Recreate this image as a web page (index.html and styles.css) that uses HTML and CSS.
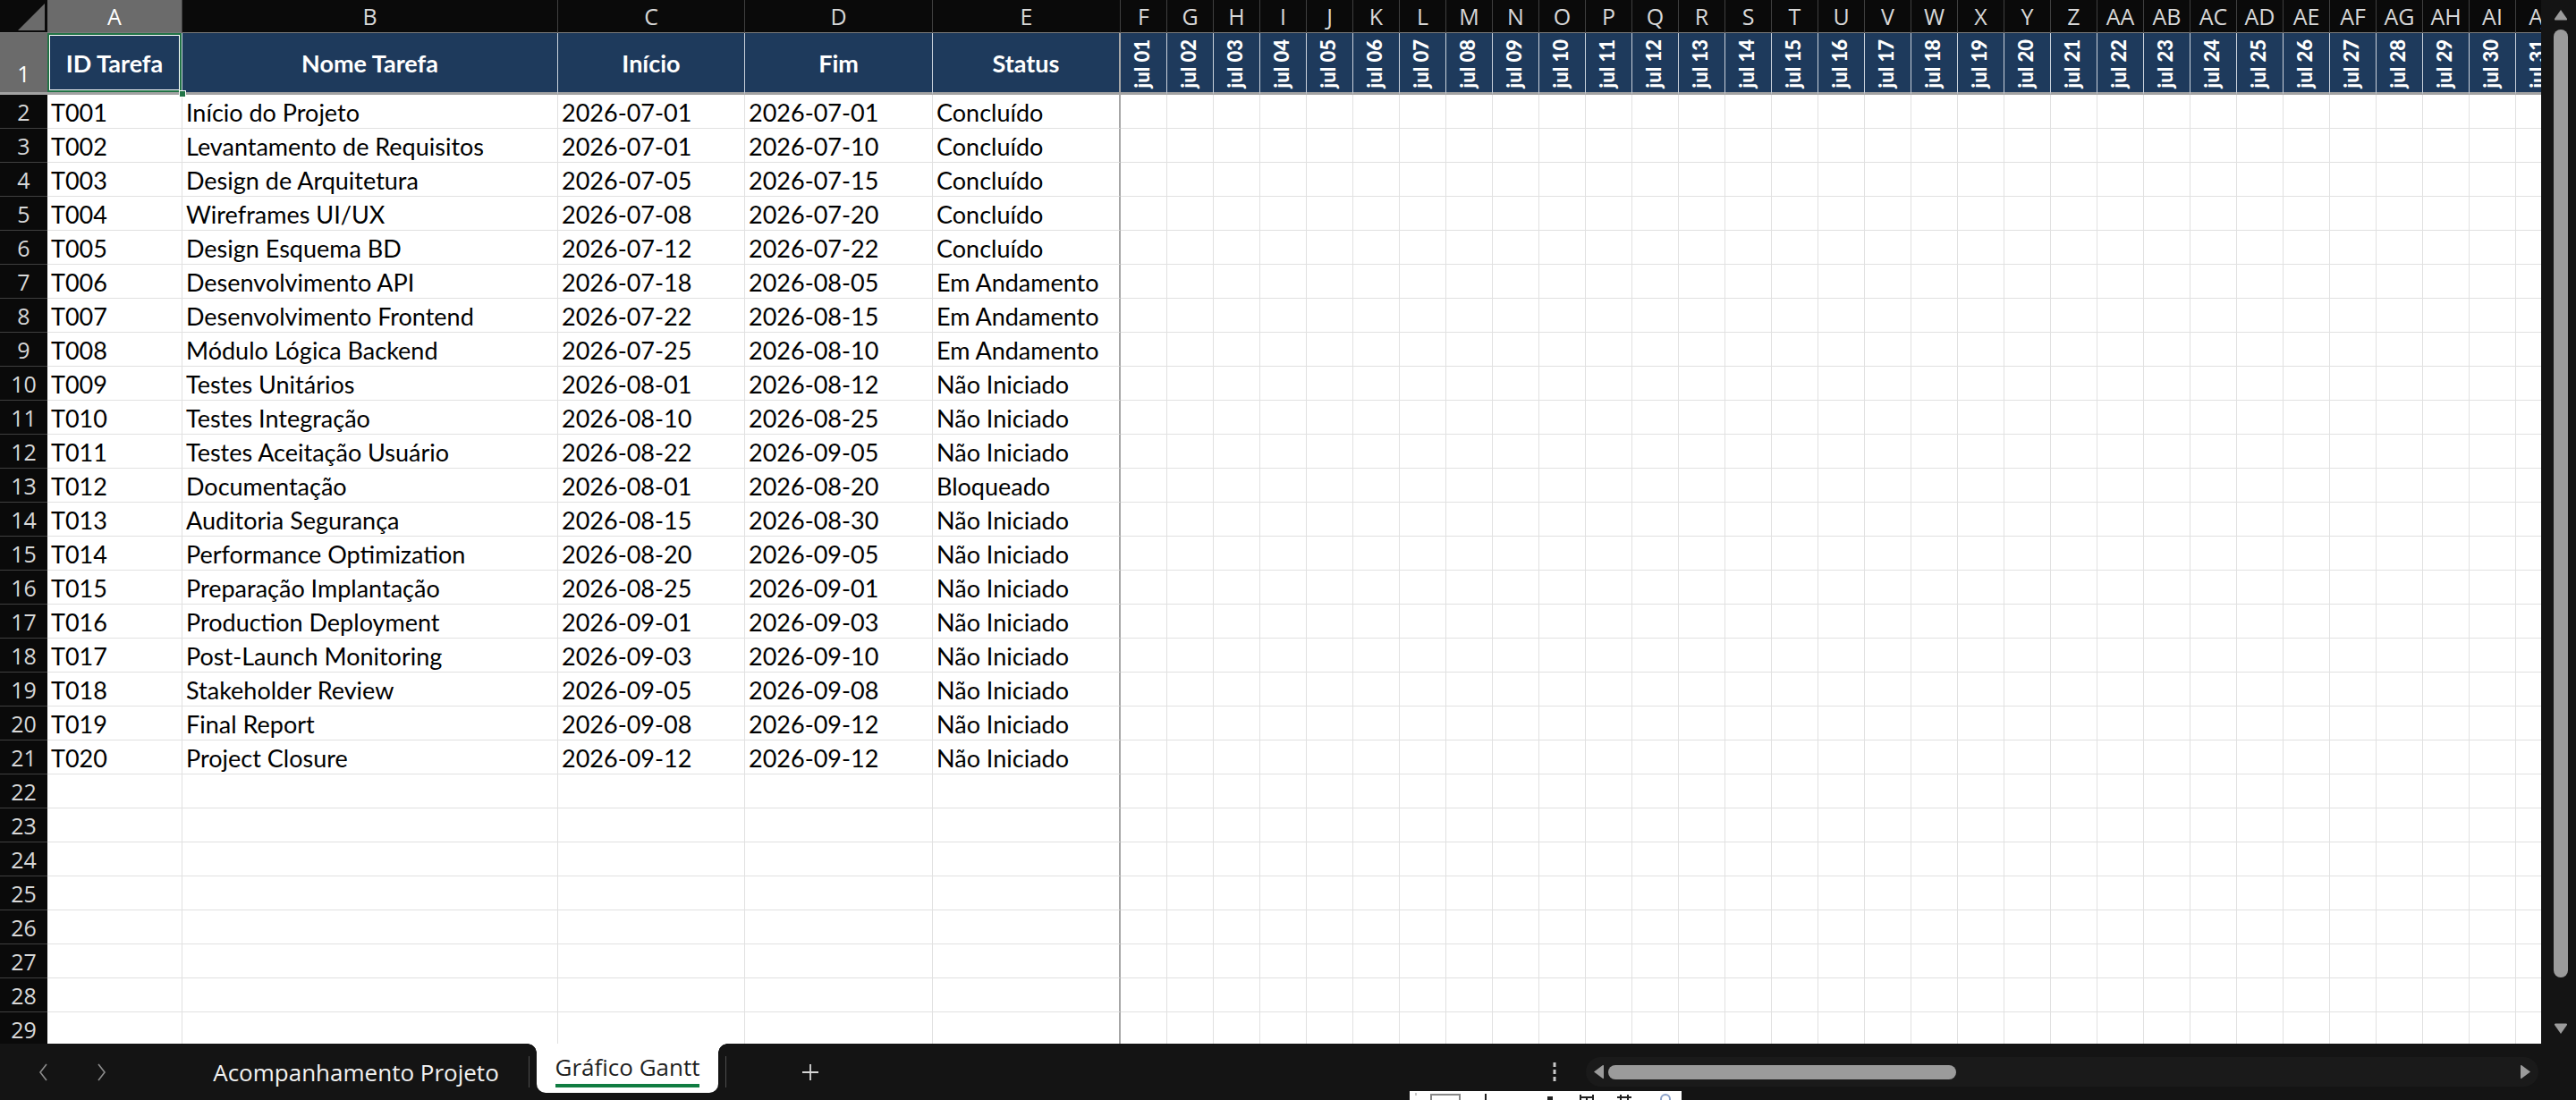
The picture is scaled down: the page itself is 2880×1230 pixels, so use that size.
FILE: index.html
```html
<!DOCTYPE html>
<html lang="pt">
<head>
<meta charset="utf-8">
<title>Gráfico Gantt</title>
<link rel="stylesheet" href="styles.css">
</head>
<body>
<div class="app">
  <div class="sheet-area">
    <div class="viewport">
      <div class="sheet">
        <div class="row">
          <div class="corner"><svg width="53" height="37" viewBox="0 0 53 37"><polygon points="20,34 50,4 50,34" fill="#6b6b6b"/></svg></div>
          <div class="colhdr sel">A</div>
          <div class="colhdr">B</div>
          <div class="colhdr">C</div>
          <div class="colhdr">D</div>
          <div class="colhdr">E</div>
          <div class="days">
            <div class="colhdr">F</div><div class="colhdr">G</div><div class="colhdr">H</div><div class="colhdr">I</div><div class="colhdr">J</div><div class="colhdr">K</div><div class="colhdr">L</div><div class="colhdr">M</div><div class="colhdr">N</div><div class="colhdr">O</div><div class="colhdr">P</div><div class="colhdr">Q</div><div class="colhdr">R</div><div class="colhdr">S</div><div class="colhdr">T</div><div class="colhdr">U</div><div class="colhdr">V</div><div class="colhdr">W</div><div class="colhdr">X</div><div class="colhdr">Y</div><div class="colhdr">Z</div><div class="colhdr">AA</div><div class="colhdr">AB</div><div class="colhdr">AC</div><div class="colhdr">AD</div><div class="colhdr">AE</div><div class="colhdr">AF</div><div class="colhdr">AG</div><div class="colhdr">AH</div><div class="colhdr">AI</div><div class="colhdr">AJ</div>
          </div>
        </div>
        <div class="row">
          <div class="rownum sel">1</div>
          <div class="th a1">ID Tarefa<span class="handle"></span></div>
          <div class="th">Nome Tarefa</div>
          <div class="th">Início</div>
          <div class="th">Fim</div>
          <div class="th pane">Status</div>
          <div class="days">
            <div class="th date"><span>jul 01</span></div><div class="th date"><span>jul 02</span></div><div class="th date"><span>jul 03</span></div><div class="th date"><span>jul 04</span></div><div class="th date"><span>jul 05</span></div><div class="th date"><span>jul 06</span></div><div class="th date"><span>jul 07</span></div><div class="th date"><span>jul 08</span></div><div class="th date"><span>jul 09</span></div><div class="th date"><span>jul 10</span></div><div class="th date"><span>jul 11</span></div><div class="th date"><span>jul 12</span></div><div class="th date"><span>jul 13</span></div><div class="th date"><span>jul 14</span></div><div class="th date"><span>jul 15</span></div><div class="th date"><span>jul 16</span></div><div class="th date"><span>jul 17</span></div><div class="th date"><span>jul 18</span></div><div class="th date"><span>jul 19</span></div><div class="th date"><span>jul 20</span></div><div class="th date"><span>jul 21</span></div><div class="th date"><span>jul 22</span></div><div class="th date"><span>jul 23</span></div><div class="th date"><span>jul 24</span></div><div class="th date"><span>jul 25</span></div><div class="th date"><span>jul 26</span></div><div class="th date"><span>jul 27</span></div><div class="th date"><span>jul 28</span></div><div class="th date"><span>jul 29</span></div><div class="th date"><span>jul 30</span></div><div class="th date"><span>jul 31</span></div>
          </div>
        </div>
        <div class="row"><div class="rownum">2</div><div class="cell">T001</div><div class="cell">Início do Projeto</div><div class="cell">2026-07-01</div><div class="cell">2026-07-01</div><div class="cell pane">Concluído</div><div class="timeline"></div></div>
        <div class="row"><div class="rownum">3</div><div class="cell">T002</div><div class="cell">Levantamento de Requisitos</div><div class="cell">2026-07-01</div><div class="cell">2026-07-10</div><div class="cell pane">Concluído</div><div class="timeline"></div></div>
        <div class="row"><div class="rownum">4</div><div class="cell">T003</div><div class="cell">Design de Arquitetura</div><div class="cell">2026-07-05</div><div class="cell">2026-07-15</div><div class="cell pane">Concluído</div><div class="timeline"></div></div>
        <div class="row"><div class="rownum">5</div><div class="cell">T004</div><div class="cell">Wireframes UI/UX</div><div class="cell">2026-07-08</div><div class="cell">2026-07-20</div><div class="cell pane">Concluído</div><div class="timeline"></div></div>
        <div class="row"><div class="rownum">6</div><div class="cell">T005</div><div class="cell">Design Esquema BD</div><div class="cell">2026-07-12</div><div class="cell">2026-07-22</div><div class="cell pane">Concluído</div><div class="timeline"></div></div>
        <div class="row"><div class="rownum">7</div><div class="cell">T006</div><div class="cell">Desenvolvimento API</div><div class="cell">2026-07-18</div><div class="cell">2026-08-05</div><div class="cell pane">Em Andamento</div><div class="timeline"></div></div>
        <div class="row"><div class="rownum">8</div><div class="cell">T007</div><div class="cell">Desenvolvimento Frontend</div><div class="cell">2026-07-22</div><div class="cell">2026-08-15</div><div class="cell pane">Em Andamento</div><div class="timeline"></div></div>
        <div class="row"><div class="rownum">9</div><div class="cell">T008</div><div class="cell">Módulo Lógica Backend</div><div class="cell">2026-07-25</div><div class="cell">2026-08-10</div><div class="cell pane">Em Andamento</div><div class="timeline"></div></div>
        <div class="row"><div class="rownum">10</div><div class="cell">T009</div><div class="cell">Testes Unitários</div><div class="cell">2026-08-01</div><div class="cell">2026-08-12</div><div class="cell pane">Não Iniciado</div><div class="timeline"></div></div>
        <div class="row"><div class="rownum">11</div><div class="cell">T010</div><div class="cell">Testes Integração</div><div class="cell">2026-08-10</div><div class="cell">2026-08-25</div><div class="cell pane">Não Iniciado</div><div class="timeline"></div></div>
        <div class="row"><div class="rownum">12</div><div class="cell">T011</div><div class="cell">Testes Aceitação Usuário</div><div class="cell">2026-08-22</div><div class="cell">2026-09-05</div><div class="cell pane">Não Iniciado</div><div class="timeline"></div></div>
        <div class="row"><div class="rownum">13</div><div class="cell">T012</div><div class="cell">Documentação</div><div class="cell">2026-08-01</div><div class="cell">2026-08-20</div><div class="cell pane">Bloqueado</div><div class="timeline"></div></div>
        <div class="row"><div class="rownum">14</div><div class="cell">T013</div><div class="cell">Auditoria Segurança</div><div class="cell">2026-08-15</div><div class="cell">2026-08-30</div><div class="cell pane">Não Iniciado</div><div class="timeline"></div></div>
        <div class="row"><div class="rownum">15</div><div class="cell">T014</div><div class="cell">Performance Optimization</div><div class="cell">2026-08-20</div><div class="cell">2026-09-05</div><div class="cell pane">Não Iniciado</div><div class="timeline"></div></div>
        <div class="row"><div class="rownum">16</div><div class="cell">T015</div><div class="cell">Preparação Implantação</div><div class="cell">2026-08-25</div><div class="cell">2026-09-01</div><div class="cell pane">Não Iniciado</div><div class="timeline"></div></div>
        <div class="row"><div class="rownum">17</div><div class="cell">T016</div><div class="cell">Production Deployment</div><div class="cell">2026-09-01</div><div class="cell">2026-09-03</div><div class="cell pane">Não Iniciado</div><div class="timeline"></div></div>
        <div class="row"><div class="rownum">18</div><div class="cell">T017</div><div class="cell">Post-Launch Monitoring</div><div class="cell">2026-09-03</div><div class="cell">2026-09-10</div><div class="cell pane">Não Iniciado</div><div class="timeline"></div></div>
        <div class="row"><div class="rownum">19</div><div class="cell">T018</div><div class="cell">Stakeholder Review</div><div class="cell">2026-09-05</div><div class="cell">2026-09-08</div><div class="cell pane">Não Iniciado</div><div class="timeline"></div></div>
        <div class="row"><div class="rownum">20</div><div class="cell">T019</div><div class="cell">Final Report</div><div class="cell">2026-09-08</div><div class="cell">2026-09-12</div><div class="cell pane">Não Iniciado</div><div class="timeline"></div></div>
        <div class="row"><div class="rownum">21</div><div class="cell">T020</div><div class="cell">Project Closure</div><div class="cell">2026-09-12</div><div class="cell">2026-09-12</div><div class="cell pane">Não Iniciado</div><div class="timeline"></div></div>
        <div class="row"><div class="rownum">22</div><div class="cell"></div><div class="cell"></div><div class="cell"></div><div class="cell"></div><div class="cell pane"></div><div class="timeline"></div></div>
        <div class="row"><div class="rownum">23</div><div class="cell"></div><div class="cell"></div><div class="cell"></div><div class="cell"></div><div class="cell pane"></div><div class="timeline"></div></div>
        <div class="row"><div class="rownum">24</div><div class="cell"></div><div class="cell"></div><div class="cell"></div><div class="cell"></div><div class="cell pane"></div><div class="timeline"></div></div>
        <div class="row"><div class="rownum">25</div><div class="cell"></div><div class="cell"></div><div class="cell"></div><div class="cell"></div><div class="cell pane"></div><div class="timeline"></div></div>
        <div class="row"><div class="rownum">26</div><div class="cell"></div><div class="cell"></div><div class="cell"></div><div class="cell"></div><div class="cell pane"></div><div class="timeline"></div></div>
        <div class="row"><div class="rownum">27</div><div class="cell"></div><div class="cell"></div><div class="cell"></div><div class="cell"></div><div class="cell pane"></div><div class="timeline"></div></div>
        <div class="row"><div class="rownum">28</div><div class="cell"></div><div class="cell"></div><div class="cell"></div><div class="cell"></div><div class="cell pane"></div><div class="timeline"></div></div>
        <div class="row"><div class="rownum">29</div><div class="cell"></div><div class="cell"></div><div class="cell"></div><div class="cell"></div><div class="cell pane"></div><div class="timeline"></div></div>
      </div>
    </div>
    <div class="vscroll">
      <svg class="varrow" width="16" height="13" viewBox="0 0 16 13"><path d="M8 1 L15 11 Q15.5 12.5 14 12.5 L2 12.5 Q0.5 12.5 1 11 Z" fill="#9b9b9b"/></svg>
      <div class="vthumb"></div>
      <svg class="varrow down" width="16" height="13" viewBox="0 0 16 13"><path d="M8 12 L15 2 Q15.5 0.5 14 0.5 L2 0.5 Q0.5 0.5 1 2 Z" fill="#9b9b9b"/></svg>
    </div>
  </div>
  <div class="tabbar">
    <div class="tabnav">
      <svg class="chev" width="16" height="22" viewBox="0 0 16 22"><polyline points="11,2 4,11 11,20" fill="none" stroke="#8c8c8c" stroke-width="1.6"/></svg>
      <svg class="chev" width="16" height="22" viewBox="0 0 16 22"><polyline points="5,2 12,11 5,20" fill="none" stroke="#8c8c8c" stroke-width="1.6"/></svg>
    </div>
    <div class="tab">Acompanhamento Projeto</div>
    <span class="tabsep"></span>
    <div class="tab active"><span class="tablabel">Gráfico Gantt</span></div>
    <span class="tabsep second"></span>
    <svg class="addsheet" width="22" height="22" viewBox="0 0 22 22"><path d="M11 2 V20 M2 11 H20" stroke="#d6d6d6" stroke-width="1.8"/></svg>
    <div class="spacer"></div>
    <svg class="more" width="6" height="22" viewBox="0 0 6 22"><rect x="1.5" y="0" width="3" height="5" fill="#c8c8c8"/><rect x="1.5" y="8" width="3" height="5" fill="#c8c8c8"/><rect x="1.5" y="16" width="3" height="5" fill="#c8c8c8"/></svg>
    <div class="hscroll">
      <svg width="14" height="17" viewBox="0 0 14 17"><path d="M2 8.5 L12 1 Q13 0.5 13 2 L13 15 Q13 16.5 12 16 Z" fill="#9b9b9b"/></svg>
      <div class="hthumb"></div>
      <div class="spacer"></div>
      <svg width="14" height="17" viewBox="0 0 14 17"><path d="M12 8.5 L2 1 Q1 0.5 1 2 L1 15 Q1 16.5 2 16 Z" fill="#9b9b9b"/></svg>
    </div>
  </div>
</div>
<div class="popup">
  <svg width="304" height="12" viewBox="0 0 304 12"><rect x="6" y="2" width="2" height="3" fill="#c8c8c8"/><rect x="24" y="4" width="32" height="10" fill="none" stroke="#888" stroke-width="2"/><rect x="84" y="3" width="2" height="9" fill="#222"/><rect x="154" y="6" width="6" height="6" fill="#222"/><path d="M191 4 V12 M191 7 H205 M205 4 V12 M198 7 V12" stroke="#222" stroke-width="2"/><path d="M232 7 H248 M236 4 V12 M244 4 V12" stroke="#222" stroke-width="2"/><circle cx="286" cy="9" r="5" fill="none" stroke="#8aa0c8" stroke-width="2"/></svg>
</div>
</body>
</html>
```

FILE: styles.css
```css
* { box-sizing: border-box; }

html, body {
  margin: 0;
  padding: 0;
}

body {
  width: 2880px;
  height: 1230px;
  overflow: hidden;
  position: relative;
  background: #141414;
  font-family: "Lato", "Liberation Sans", sans-serif;
}

.app {
  display: flex;
  flex-direction: column;
  height: 1230px;
}

.sheet-area {
  display: flex;
  height: 1167px;
}

.viewport {
  width: 2841px;
  height: 1167px;
  overflow: hidden;
  background: #ffffff;
}

.sheet {
  display: grid;
  grid-template-columns: 53px 151px 420px 209px 210px 210px 1612px;
  grid-template-rows: 37px 69px;
  grid-auto-rows: 38px;
  width: max-content;
}

.row { display: contents; }

.corner {
  background: #0a0a0a;
  border-bottom: 1px solid #7a7a7a;
}
.corner svg { display: block; }

.days {
  display: flex;
}
.days > * { flex: 0 0 52px; }

.colhdr {
  background: #0a0a0a;
  color: #d8d8d8;
  font-family: "Open Sans", "Noto Sans", sans-serif;
  font-size: 25px;
  display: flex;
  align-items: center;
  justify-content: center;
  border-right: 1px solid #3f3f3f;
  border-bottom: 1px solid #7a7a7a;
  white-space: nowrap;
  overflow: hidden;
}
.colhdr.sel {
  background: #6b6b6b;
  color: #ffffff;
}

.rownum {
  background: #0a0a0a;
  color: #d8d8d8;
  font-family: "Open Sans", "Noto Sans", sans-serif;
  font-size: 25px;
  display: flex;
  align-items: center;
  justify-content: center;
  border-bottom: 1px solid #3f3f3f;
}
.rownum.sel {
  background: #6b6b6b;
  color: #ffffff;
  align-items: flex-end;
  padding-bottom: 4px;
  border-bottom: 3px solid #a2a2a2;
}

.th {
  position: relative;
  background: #1e3a5c;
  color: #ffffff;
  font-weight: 700;
  font-size: 27px;
  display: flex;
  align-items: center;
  justify-content: center;
  border-right: 1px solid #c9d1db;
  border-bottom: 3px solid #a2a2a2;
  white-space: nowrap;
}
.th.pane { border-right: 2px solid #a6a6a6; }

.th.a1 {
  box-shadow: inset 0 0 0 2px #217346, inset 0 0 0 3px #ffffff;
}
.handle {
  position: absolute;
  right: -5px;
  bottom: -6px;
  width: 8px;
  height: 8px;
  background: #217346;
  border: 1px solid #ffffff;
  z-index: 2;
}

.date span {
  writing-mode: vertical-rl;
  transform: rotate(180deg);
  font-size: 22px;
  font-weight: 900;
  line-height: 24px;
  padding-left: 3px;
  margin-top: 2px;
}

.cell {
  font-size: 27px;
  color: #000000;
  padding: 4px 0 0 4px;
  line-height: 32px;
  border-right: 1px solid #e1e1e1;
  border-bottom: 1px solid #e1e1e1;
  white-space: nowrap;
  overflow: hidden;
}
.cell.pane { border-right: 2px solid #a6a6a6; }

.timeline {
  border-bottom: 1px solid #e1e1e1;
  background: repeating-linear-gradient(to right, transparent 0 51px, #e1e1e1 51px 52px);
}

.vscroll {
  width: 39px;
  height: 1167px;
  background: #141414;
  display: flex;
  flex-direction: column;
  align-items: center;
  padding-top: 10px;
  padding-left: 4px;
}
.varrow { display: block; flex: none; }
.vthumb {
  width: 16px;
  height: 1060px;
  margin-top: 10px;
  border-radius: 8px;
  background: #9b9b9b;
}
.varrow.down { margin-top: 51px; }

.tabbar {
  height: 63px;
  display: flex;
  align-items: center;
  background: #141414;
  font-family: "Open Sans", "Noto Sans", sans-serif;
  font-size: 26px;
}

.tabnav {
  width: 205px;
  display: flex;
  align-items: center;
  gap: 48px;
  padding-left: 41px;
}
.chev { display: block; }

.tab {
  width: 386px;
  height: 63px;
  display: flex;
  align-items: center;
  justify-content: center;
  color: #f2f2f2;
  white-space: nowrap;
}
.tab.active {
  position: relative;
  width: 203px;
  height: 55px;
  align-self: flex-start;
  margin-left: 8px;
  align-items: flex-start;
  padding-top: 11px;
  background: #ffffff;
  border-radius: 0 0 10px 10px;
  color: #1f1f1f;
}
.tab.active::before,
.tab.active::after {
  content: "";
  position: absolute;
  top: 0;
  width: 10px;
  height: 10px;
}
.tab.active::before {
  left: -10px;
  background: radial-gradient(circle at 0 100%, transparent 9.5px, #ffffff 10px);
}
.tab.active::after {
  right: -10px;
  background: radial-gradient(circle at 100% 100%, transparent 9.5px, #ffffff 10px);
}
.tablabel {
  display: inline-block;
  line-height: 31px;
  padding-bottom: 3px;
  border-bottom: 4px solid #107c41;
}

.tabsep {
  width: 1px;
  height: 35px;
  background: #4c4c4c;
  flex: none;
}
.tabsep.second { margin-left: 8px; }

.addsheet {
  display: block;
  margin-left: 83px;
}

.spacer { flex: 1; }

.more {
  display: block;
  margin-right: 32px;
}

.hscroll {
  width: 1065px;
  height: 33px;
  margin-right: 42px;
  border-radius: 17px;
  background: #1a1a1a;
  display: flex;
  align-items: center;
  padding: 0 7px;
  gap: 4px;
}
.hscroll svg { display: block; }
.hthumb {
  width: 389px;
  height: 16px;
  border-radius: 8px;
  background: #9b9b9b;
}

.popup {
  position: absolute;
  left: 1576px;
  top: 1220px;
  width: 304px;
  height: 14px;
  background: #ffffff;
  overflow: hidden;
}
.popup svg { display: block; }
```
